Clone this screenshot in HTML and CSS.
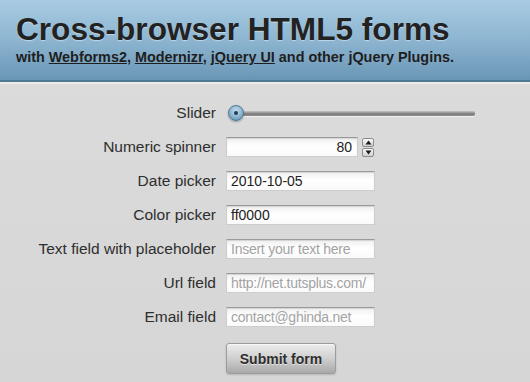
FILE: index.html
```html
<!DOCTYPE html>
<html lang="en">
<head>
<meta charset="utf-8">
<title>Cross-browser HTML5 forms</title>
<link rel="stylesheet" href="styles.css">
</head>
<body>
<header class="masthead">
  <h1 class="title">Cross-browser HTML5 forms</h1>
  <p class="subtitle">with <a href="#">Webforms2</a>, <a href="#">Modernizr</a>, <a href="#">jQuery UI</a> and other jQuery Plugins.</p>
</header>
<form class="form">
  <label class="label">Slider</label>
  <div class="slider">
    <div class="track"></div>
    <div class="thumb"><span class="dot"></span></div>
  </div>

  <label class="label">Numeric spinner</label>
  <div class="spin-wrap">
    <input class="field number" type="text" value="80">
    <div class="spinner">
      <span class="spin-btn"><svg width="7" height="5" viewBox="0 0 7 5"><path d="M3.5 0.5 L6.5 4.5 L0.5 4.5 Z" fill="#1a1a1a"/></svg></span>
      <span class="spin-btn"><svg width="7" height="5" viewBox="0 0 7 5"><path d="M0.5 0.5 L6.5 0.5 L3.5 4.5 Z" fill="#1a1a1a"/></svg></span>
    </div>
  </div>

  <label class="label">Date picker</label>
  <input class="field" type="text" value="2010-10-05">

  <label class="label">Color picker</label>
  <input class="field" type="text" value="ff0000">

  <label class="label">Text field with placeholder</label>
  <input class="field" type="text" placeholder="Insert your text here">

  <label class="label">Url field</label>
  <input class="field" type="text" placeholder="http://net.tutsplus.com/">

  <label class="label">Email field</label>
  <input class="field" type="text" placeholder="contact@ghinda.net">

  <div class="submit-row">
    <button class="submit" type="button">Submit form</button>
  </div>
</form>
</body>
</html>
```

FILE: styles.css
```css
html, body {
  margin: 0;
  padding: 0;
}
body {
  width: 530px;
  height: 382px;
  overflow: hidden;
  background: linear-gradient(#dcdcdc, #d6d6d6);
  font-family: "Liberation Sans", Arial, sans-serif;
  color: #333;
}
.masthead {
  height: 82px;
  padding: 14px 0 0 16px;
  box-sizing: border-box;
  background: linear-gradient(#a8cbe2 0%, #8db5d1 50%, #6a96b5 100%);
  border-bottom: 2px solid #4f7893;
  box-shadow: 0 2px 0 #ececec;
}
.title {
  margin: 0;
  font-size: 31.6px;
  line-height: 31px;
  font-weight: bold;
  color: #222;
  text-shadow: 0 1px 1px rgba(255,255,255,0.45);
}
.subtitle {
  margin: 4px 0 0 0;
  font-size: 14.4px;
  line-height: 16px;
  font-weight: bold;
  color: #1e1e1e;
}
.subtitle a {
  color: #1e1e1e;
  text-decoration: underline;
}
.form {
  display: grid;
  grid-template-columns: 216px 249px;
  column-gap: 10px;
  row-gap: 14px;
  padding-top: 21px;
  align-items: center;
}
.label {
  text-align: right;
  font-size: 15.5px;
  line-height: 20px;
  color: #2e2e2e;
  white-space: nowrap;
}
.field {
  box-sizing: border-box;
  width: 149px;
  height: 20px;
  margin: 0;
  padding: 0 4px;
  border: 1px solid #cdcdcd;
  border-top-color: #9a9a9a;
  border-radius: 0;
  background: linear-gradient(#efefef, #ffffff 45%, #fafafa);
  box-shadow: inset 0 1px 1px rgba(0,0,0,0.12);
  font-family: "Liberation Sans", Arial, sans-serif;
  font-size: 14px;
  color: #222;
  outline: none;
}
.field::placeholder {
  color: #a3a3a3;
  letter-spacing: -0.25px;
}
.spin-wrap {
  display: flex;
  align-items: center;
  gap: 4px;
}
.number {
  width: 132px;
  text-align: right;
  padding-right: 5px;
}
.spinner {
  display: flex;
  flex-direction: column;
  gap: 1px;
}
.spin-btn {
  display: flex;
  align-items: center;
  justify-content: center;
  width: 12px;
  height: 9px;
  box-sizing: border-box;
  border: 1px solid #8c8c8c;
  border-radius: 2px;
  background: linear-gradient(#fbfbfb, #cfcfcf);
}
.slider {
  position: relative;
  height: 20px;
  display: flex;
  align-items: center;
}
.track {
  margin-left: 10px;
  flex: 1;
  height: 5px;
  border-radius: 2px;
  background: linear-gradient(#c4c4c4, #7a7a7a 60%, #8f8f8f);
  box-shadow: 0 1px 0 rgba(255,255,255,0.6);
}
.thumb {
  position: absolute;
  left: 2px;
  top: 2px;
  width: 16px;
  height: 16px;
  box-sizing: border-box;
  border-radius: 50%;
  border: 1px solid #4f7894;
  background: radial-gradient(circle at 50% 35%, #c6dcea 0%, #8bb3cf 55%, #5683a3 100%);
  box-shadow: 0 1px 2px rgba(0,0,0,0.3);
  display: flex;
  align-items: center;
  justify-content: center;
}
.dot {
  width: 4px;
  height: 4px;
  border-radius: 50%;
  background: #1d3d55;
}
.submit-row {
  grid-column: 2;
  margin-top: 2px;
}
.submit {
  width: 110px;
  height: 31px;
  margin: 0;
  padding: 0;
  border: 1px solid #9c9c9c;
  border-radius: 3px;
  background: linear-gradient(#ececec, #cfcfcf 50%, #a9a9a9);
  box-shadow: 0 1px 2px rgba(0,0,0,0.15), inset 0 1px 0 rgba(255,255,255,0.6);
  font-family: "Liberation Sans", Arial, sans-serif;
  font-size: 14px;
  font-weight: bold;
  color: #2e2e2e;
  text-shadow: 0 1px 0 rgba(255,255,255,0.6);
}
```
